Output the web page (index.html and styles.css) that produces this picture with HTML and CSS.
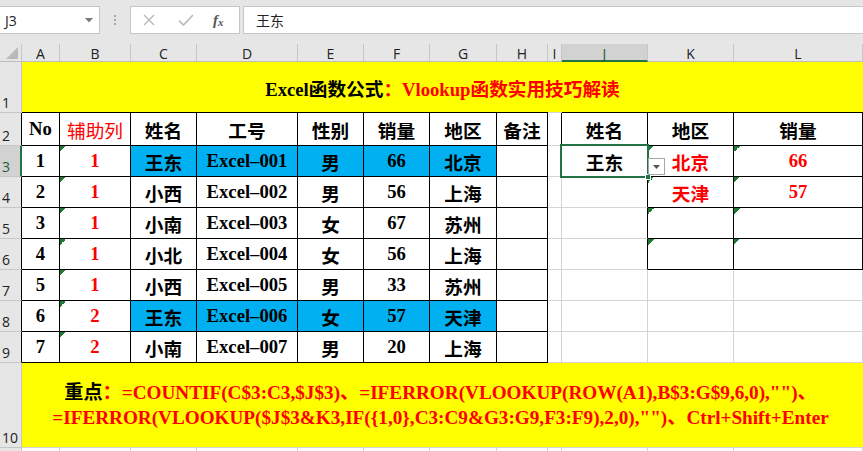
FILE: index.html
```html
<!DOCTYPE html>
<html lang="zh-CN">
<head>
<meta charset="utf-8">
<title>Excel</title>
<link rel="stylesheet" href="styles.css">
</head>
<body>
<div class="topbar">
  <div class="namebox"><span>J3</span><svg class="nb-arrow" width="8" height="5" viewBox="0 0 8 5"><path d="M0 0H8L4 4.5Z" fill="#7a7a7a"/></svg></div>
  <div class="dots"><i></i><i></i><i></i></div>
  <div class="fxbtns">
    <svg class="btn-x" width="12" height="12" viewBox="0 0 12 12"><path d="M1 1L11 11M11 1L1 11" stroke="#b8b8b8" stroke-width="1.4" fill="none"/></svg>
    <svg class="btn-ok" width="16" height="12" viewBox="0 0 16 12"><path d="M1 6.5L5.5 11L15 1" stroke="#b8b8b8" stroke-width="1.6" fill="none"/></svg>
    <span class="fx">f<sub>x</sub></span>
  </div>
  <div class="fxinput">王东</div>
</div>

<div class="sheet">
  <!-- column headers -->
  <div class="corner"><svg width="12" height="12" viewBox="0 0 12 12"><path d="M12 0V12H0Z" fill="#b9b9b9"/></svg></div>
  <div class="ch">A</div><div class="ch">B</div><div class="ch">C</div><div class="ch">D</div><div class="ch">E</div><div class="ch">F</div><div class="ch">G</div><div class="ch">H</div><div class="ch">I</div><div class="ch ch-sel">J</div><div class="ch">K</div><div class="ch">L</div>

  <!-- row 1 -->
  <div class="rh">1</div>
  <div class="title"><span class="blk">Excel函数公式</span><span class="red">：Vlookup函数实用技巧解读</span></div>

  <!-- row 2 -->
  <div class="rh edge">2</div>
  <div class="c bd">No</div><div class="c bd red thin">辅助列</div><div class="c bd">姓名</div><div class="c bd">工号</div><div class="c bd">性别</div><div class="c bd">销量</div><div class="c bd">地区</div><div class="c bd">备注</div>
  <div class="c bdr"></div><div class="c bd">姓名</div><div class="c bd">地区</div><div class="c bd">销量</div>

  <!-- row 3 -->
  <div class="rh rh-sel">3</div>
  <div class="c bd">1</div><div class="c bd red tri">1</div><div class="c bd blue">王东</div><div class="c bd blue">Excel–001</div><div class="c bd blue">男</div><div class="c bd blue">66</div><div class="c bd blue">北京</div><div class="c bd"></div>
  <div class="c bdr"></div>
  <div class="c bd active">王东<div class="selbox"><i class="handle"></i></div><div class="ddbtn"><svg width="7" height="4" viewBox="0 0 7 4"><path d="M0 0H7L3.5 4Z" fill="#555"/></svg></div></div>
  <div class="c bd red tri">北京</div><div class="c bd red tri">66</div>

  <!-- row 4 -->
  <div class="rh edge">4</div>
  <div class="c bd">2</div><div class="c bd red tri">1</div><div class="c bd">小西</div><div class="c bd">Excel–002</div><div class="c bd">男</div><div class="c bd">56</div><div class="c bd">上海</div><div class="c bd"></div>
  <div class="c"></div><div class="c bdr"></div><div class="c bd red tri">天津</div><div class="c bd red tri">57</div>

  <!-- row 5 -->
  <div class="rh edge">5</div>
  <div class="c bd">3</div><div class="c bd red tri">1</div><div class="c bd">小南</div><div class="c bd">Excel–003</div><div class="c bd">女</div><div class="c bd">67</div><div class="c bd">苏州</div><div class="c bd"></div>
  <div class="c"></div><div class="c bdr"></div><div class="c bd tri"></div><div class="c bd tri"></div>

  <!-- row 6 -->
  <div class="rh edge">6</div>
  <div class="c bd">4</div><div class="c bd red tri">1</div><div class="c bd">小北</div><div class="c bd">Excel–004</div><div class="c bd">女</div><div class="c bd">56</div><div class="c bd">上海</div><div class="c bd"></div>
  <div class="c"></div><div class="c bdr"></div><div class="c bd tri"></div><div class="c bd tri"></div>

  <!-- row 7 -->
  <div class="rh edge">7</div>
  <div class="c bd">5</div><div class="c bd red tri">1</div><div class="c bd">小西</div><div class="c bd">Excel–005</div><div class="c bd">男</div><div class="c bd">33</div><div class="c bd">苏州</div><div class="c bd"></div>
  <div class="c"></div><div class="c"></div><div class="c"></div><div class="c"></div>

  <!-- row 8 -->
  <div class="rh edge">8</div>
  <div class="c bd">6</div><div class="c bd red tri">2</div><div class="c bd blue">王东</div><div class="c bd blue">Excel–006</div><div class="c bd blue">女</div><div class="c bd blue">57</div><div class="c bd blue">天津</div><div class="c bd"></div>
  <div class="c"></div><div class="c"></div><div class="c"></div><div class="c"></div>

  <!-- row 9 -->
  <div class="rh edge">9</div>
  <div class="c bd">7</div><div class="c bd red tri">2</div><div class="c bd">小南</div><div class="c bd">Excel–007</div><div class="c bd">男</div><div class="c bd">20</div><div class="c bd">上海</div><div class="c bd"></div>
  <div class="c"></div><div class="c"></div><div class="c"></div><div class="c"></div>

  <!-- row 10 -->
  <div class="rh">10</div>
  <div class="note"><p><span class="blk">重点</span><span class="red">：=COUNTIF(C$3:C3,$J$3)、=IFERROR(VLOOKUP(ROW(A1),B$3:G$9,6,0),"")、</span><br><span class="red">=IFERROR(VLOOKUP($J$3&amp;K3,IF({1,0},C3:C9&amp;G3:G9,F3:F9),2,0),"")、Ctrl+Shift+Enter</span></p></div>

  <!-- row 11 -->
  <div class="rh"></div>
  <div class="c"></div><div class="c"></div><div class="c"></div><div class="c"></div><div class="c"></div><div class="c"></div><div class="c"></div><div class="c"></div><div class="c"></div><div class="c"></div><div class="c"></div><div class="c"></div>
</div>
</body>
</html>
```
FILE: styles.css
```css
html, body {
  margin: 0;
  width: 863px;
  height: 451px;
  overflow: hidden;
}
body {
  background: #e6e6e6;
  font-family: "Liberation Serif", "Noto Sans CJK SC", serif;
}

/* formula bar */
.topbar {
  display: flex;
  align-items: flex-start;
  height: 44px;
  padding-top: 6px;
  box-sizing: border-box;
}
.namebox {
  width: 100px;
  height: 28px;
  box-sizing: border-box;
  background: #fff;
  border: 1px solid #c6c6c6;
  border-left: 0;
  display: flex;
  align-items: center;
  justify-content: space-between;
  padding: 0 6px 0 5px;
  font: 14px "Open Sans", "Noto Sans", sans-serif;
  color: #222;
}
.dots {
  width: 30px;
  height: 28px;
  display: flex;
  flex-direction: column;
  align-items: center;
  justify-content: center;
  gap: 2px;
}
.dots i {
  display: block;
  width: 2px;
  height: 2px;
  background: #a8a8a8;
}
.fxbtns {
  width: 110px;
  height: 28px;
  box-sizing: border-box;
  background: #fff;
  border: 1px solid #c6c6c6;
  display: flex;
  align-items: center;
  padding-left: 12px;
}
.btn-x { margin-right: 23px; }
.btn-ok { margin-right: 19px; }
.fx {
  font: italic bold 15px "Liberation Serif", serif;
  color: #555;
  line-height: 1;
}
.fx sub {
  font-size: 11px;
  vertical-align: -1px;
}
.fxinput {
  flex: 1;
  margin-left: 3px;
  height: 28px;
  box-sizing: border-box;
  background: #fff;
  border: 1px solid #c6c6c6;
  border-right: 0;
  padding-left: 12px;
  display: flex;
  align-items: center;
  font: 14px "Noto Sans CJK SC", sans-serif;
  color: #222;
}

/* sheet grid */
.sheet {
  display: grid;
  grid-template-columns: 22px 38px 71px 66px 101px 66px 66px 67px 51px 14px 86px 86px 1fr;
  grid-template-rows: 18px 51px 33px repeat(7, 31px) 85px 20px;
  background: #fff;
}
.sheet > div {
  box-sizing: border-box;
}
.corner {
  background: #e6e6e6;
  border-right: 1px solid #c6c6c6;
  border-bottom: 1px solid #bdbdbd;
  display: flex;
  align-items: flex-end;
  justify-content: flex-end;
  padding: 0 3px 2px 0;
}
.ch {
  background: #e6e6e6;
  border-right: 1px solid #c6c6c6;
  border-bottom: 1px solid #bdbdbd;
  display: flex;
  align-items: center;
  justify-content: center;
  padding-top: 2px;
  font: 14px "Open Sans", "Noto Sans", sans-serif;
  color: #222;
}
.ch-sel {
  background: #d2d2d2;
  border-bottom: 2px solid #217346;
  color: #1f5c36;
}
.rh {
  background: #e6e6e6;
  border-right: 1px solid #c6c6c6;
  border-bottom: 1px solid #c6c6c6;
  display: flex;
  align-items: flex-end;
  padding: 0 0 1px 2px;
  font: 14px "Open Sans", "Noto Sans", sans-serif;
  color: #222;
  line-height: 16px;
}
.rh.edge { border-right-color: #000; }
.rh-sel {
  background: #d2d2d2;
  border-right: 2px solid #217346;
  color: #1f5c36;
}

.c {
  position: relative;
  border-right: 1px solid #d4d4d4;
  border-bottom: 1px solid #d4d4d4;
  display: flex;
  align-items: center;
  justify-content: center;
  font-size: 18.67px;
  font-weight: bold;
  color: #000;
  white-space: nowrap;
}
.c.bd { border-right-color: #000; border-bottom-color: #000; }
.c.bdr { border-right-color: #000; }
.blue { background: #00b0f0; }
.red { color: #ff0000; }
.blk { color: #000; }
.thin { font-weight: normal; }
.tri::before {
  content: "";
  position: absolute;
  left: 0;
  top: 0;
  width: 6px;
  height: 6px;
  background: linear-gradient(135deg, #1e7b34 50%, transparent 50%);
}

.active { z-index: 2; }
.selbox {
  position: absolute;
  left: -2px;
  top: -2px;
  right: -2px;
  bottom: -2px;
  border: 2px solid #217346;
  pointer-events: none;
}
.handle {
  position: absolute;
  left: 83px;
  top: 28px;
  width: 6px;
  height: 6px;
  box-sizing: border-box;
  background: #217346;
  border: 1px solid #fff;
}
.ddbtn {
  position: absolute;
  left: 86px;
  top: 12px;
  width: 17px;
  height: 17px;
  box-sizing: border-box;
  background: #fff;
  border: 1px solid #a6a6a6;
  display: flex;
  align-items: center;
  justify-content: center;
}

.title {
  grid-column: 2 / span 12;
  display: flex;
  align-items: center;
  justify-content: center;
  font-size: 18.67px;
  font-weight: bold;
  background:
    linear-gradient(#000, #000) left bottom / 526px 1px no-repeat,
    linear-gradient(#000, #000) 540px 100% / 100% 1px no-repeat,
    linear-gradient(#d4d4d4, #d4d4d4) left bottom / 100% 1px no-repeat,
    #ffff00;
}
.note {
  grid-column: 2 / span 12;
  background: #ffff00;
  border-bottom: 1px solid #d4d4d4;
  display: flex;
  align-items: center;
  justify-content: center;
  padding-right: 4px;
  font-size: 19.2px;
  font-weight: bold;
  text-align: center;
}
.note p {
  margin: 0;
  line-height: 25px;
  white-space: nowrap;
}
```
